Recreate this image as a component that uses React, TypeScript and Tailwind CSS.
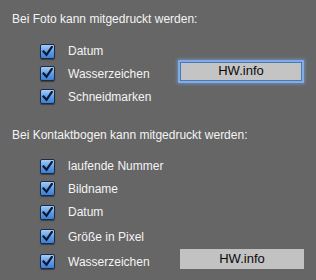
import React from 'react';

function Check() {
  return (
    <span className="flex h-[15px] w-[15px] shrink-0 items-center justify-center rounded-[2px] border border-[#1c2a44] bg-gradient-to-b from-[#a9cdf6] via-[#5f9ee8] to-[#3d7fd6] shadow-[0_1px_1px_rgba(0,0,0,0.4)]">
      <svg width="11" height="11" viewBox="0 0 11 11">
        <path d="M1.5 5.5 L4.5 8.8 L9.8 1" fill="none" stroke="#0d1830" strokeWidth="2.2" strokeLinecap="square" />
      </svg>
    </span>
  );
}

function Row({ label, h, children }: { label: string; h: string; children?: React.ReactNode }) {
  return (
    <div className={`flex items-center ${h}`}>
      <div className="flex w-[140px] items-center gap-[13px]">
        <Check />
        <span>{label}</span>
      </div>
      {children}
    </div>
  );
}

export default function App() {
  return (
    <div className="h-[280px] w-[316px] bg-[#666666] pl-[12px] pt-[9px] text-[12px] text-[#f4f4f4] [font-family:'Liberation_Sans',Arial,sans-serif]">
      <div className="h-[20px] leading-[20px]">Bei Foto kann mitgedruckt werden:</div>
      <div className="mt-[11px] pl-[28px]">
        <Row label="Datum" h="h-[22px]" />
        <Row label="Wasserzeichen" h="h-[23px]">
          <div className="mb-[5px] flex h-[19px] w-[122px] items-center justify-center border border-[#4a78b8] bg-[#c4c4c4] text-[13px] text-[#0a0a0a] shadow-[0_0_0_2px_#80ade8,0_0_3px_3px_rgba(120,170,235,0.55)]">
            HW.info
          </div>
        </Row>
        <Row label="Schneidmarken" h="h-[23px]" />
      </div>
      <div className="mt-[17px] h-[20px] leading-[20px]">Bei Kontaktbogen kann mitgedruckt werden:</div>
      <div className="mt-[10px] pl-[28px]">
        <Row label="laufende Nummer" h="h-[22px]" />
        <Row label="Bildname" h="h-[23px]" />
        <Row label="Datum" h="h-[24px]" />
        <Row label="Größe in Pixel" h="h-[25px]" />
        <Row label="Wasserzeichen" h="h-[25px]">
          <div className="mb-[5px] flex h-[20px] w-[124px] items-center justify-center bg-[#c2c2c2] text-[13px] text-[#0a0a0a]">
            HW.info
          </div>
        </Row>
      </div>
    </div>
  );
}
